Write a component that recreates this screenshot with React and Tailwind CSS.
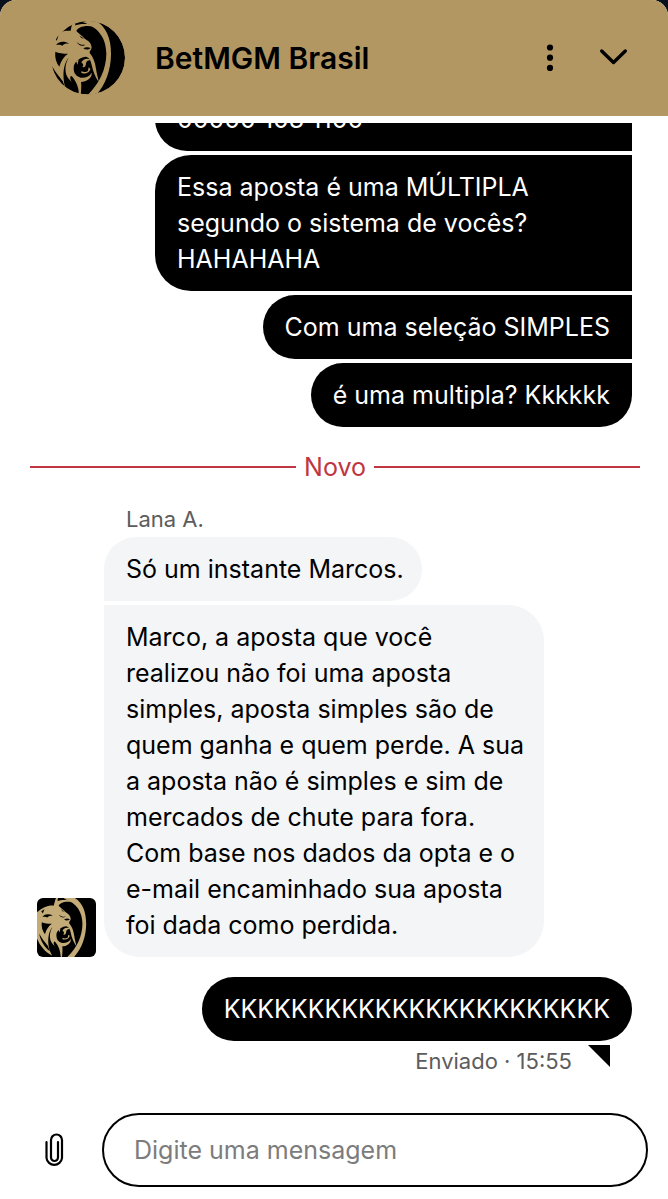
const sent = [
  { text: '00000 103 1100', shape: 'w-full rounded-l-[36px]' },
  { text: 'Essa aposta é uma MÚLTIPLA segundo o sistema de vocês? HAHAHAHA', shape: 'rounded-l-[36px]' },
  { text: 'Com uma seleção SIMPLES', shape: 'rounded-l-[36px]' },
  { text: 'é uma multipla? Kkkkkk', shape: 'rounded-l-[36px] rounded-br-[36px]' },
]

const received = [
  { text: 'Só um instante Marcos.', shape: 'rounded-t-[36px] rounded-br-[36px]' },
  {
    text: 'Marco, a aposta que você realizou não foi uma aposta simples, aposta simples são de quem ganha e quem perde. A sua a aposta não é simples e sim de mercados de chute para fora. Com base nos dados da opta e o e-mail encaminhado sua aposta foi dada como perdida.',
    shape: 'rounded-r-[36px] rounded-bl-[36px]',
  },
]

function LionHead() {
  return (
    <g>
      <g fill="currentColor">
        {/* juba */}
        <path d="M160 28C198 46 214 84 213 135C212 182 196 226 166 258L142 256C178 222 199 178 199 130C198 88 180 54 128 36Z" />
        <path d="M92 64C92 46 118 39 150 43L160 50C136 45 112 51 108 66Z" />
        <path d="M92 66C93 52 96 42 102 28L109 28C104 42 105 48 110 54L104 68Z" />
        {/* rosto */}
        <path d="M20 95C42 74 60 64 78 62L108 62C118 72 128 78 134 86L140 90C150 95 154 104 155 113C154 120 148 122 149 129C160 142 165 156 168 176C170 192 175 205 176 216C165 200 159 184 155 165C152 150 148 143 138 140C124 141 108 150 102 166C98 186 106 198 122 203C138 204 149 199 155 188C157 205 140 215 123 216C125 228 123 245 122 258H117C117 238 112 218 97 200C90 192 88 206 96 220L84 250C52 235 28 200 20 160Z" />
      </g>
      <g fill="#000">
        <path d="M46 125C56 129 68 131 84 131C72 139 63 152 58 170C48 157 44 142 46 125Z" />
        <path d="M36 168C48 190 58 200 68 213L76 234C58 222 42 198 36 168Z" />
        {/* mechas da barba */}
        <path d="M86 143C76 160 74 178 79 194C85 210 104 218 117 256L88 254C78 240 72 226 71 208C69 184 72 160 86 143Z" />
        <path d="M48 105C58 93 72 93 88 100C78 101 72 101 67 107C60 103 56 104 48 105Z" />
        <path d="M110 96C118 103 126 106 136 104C126 111 116 107 110 96Z" />
        <path d="M130 115C137 110 145 111 152 114C145 120 136 120 130 115Z" />
        <path d="M44 84L56 76L50 92Z" />
        <path d="M118 76L132 86L124 84Z" />
      </g>
      <g fill="currentColor">
        {/* dentes e língua */}
        <path d="M124 158C128 146 144 143 153 150C146 150 139 153 138 160C138 169 133 174 127 171C132 165 130 160 124 158Z" />
        <path d="M124 184C133 188 141 186 144 182L146 172L151 176C150 187 136 193 124 189Z" />
        <path d="M108 152L116 150L112 164Z" />
      </g>
    </g>
  )
}

function Logo() {
  return (
    <svg viewBox="33 27 228 234" className="w-[76px] h-[78px] shrink-0 text-[#b29762]" aria-hidden="true">
      <defs>
        <clipPath id="logo-disc">
          <circle cx="144" cy="143" r="111" />
        </clipPath>
      </defs>
      <g clipPath="url(#logo-disc)">
        <circle cx="145" cy="143" r="110" />
        <LionHead />
      </g>
    </svg>
  )
}

function Avatar() {
  return (
    <svg viewBox="28 34 222 222" className="w-[59px] h-[59px] shrink-0 rounded-md bg-black text-[#c4ac78]" aria-hidden="true">
      <LionHead />
    </svg>
  )
}

function Bubble({ text, shape, tone }) {
  return <p className={`${shape} ${tone} py-[14px] pl-[22px]`}>{text}</p>
}

export default function App() {
  return (
    <div className="h-screen bg-[#08111c]">
      <div className="h-full flex flex-col overflow-hidden rounded-t-2xl bg-white font-['Inter','Liberation_Sans',sans-serif] text-[25px] leading-[36px] text-black">
        <header className="flex items-center shrink-0 h-[116px] pl-[51px] pr-9 bg-[#b29762]">
          <Logo />
          <h1 className="flex-1 ml-7 text-3xl font-semibold">BetMGM Brasil</h1>
          <button type="button" aria-label="Mais opções" className="mr-7">
            <svg viewBox="0 0 36 36" className="w-9 h-9" fill="currentColor" aria-hidden="true">
              <circle cx="18" cy="7.5" r="3.1" />
              <circle cx="18" cy="17.7" r="3.1" />
              <circle cx="18" cy="27.9" r="3.1" />
            </svg>
          </button>
          <button type="button" aria-label="Minimizar">
            <svg viewBox="0 0 36 36" className="w-9 h-9" fill="none" stroke="currentColor" strokeWidth="3.4" strokeLinecap="round" strokeLinejoin="round" aria-hidden="true">
              <path d="M5.7 11L17.5 22.5L29.3 11" />
            </svg>
          </button>
        </header>

        <main className="flex-1 min-h-0 flex flex-col justify-end overflow-hidden mt-[7px]">
          <div className="flex flex-col items-end gap-1 pl-[155px] pr-9">
            {sent.map((m) => (
              <Bubble key={m.text} {...m} tone="bg-black text-white pr-[22px]" />
            ))}
          </div>

          <div className="flex items-center gap-2 mt-[22px] pl-[30px] pr-7 text-[#bf3542]">
            <span className="flex-1 h-0.5 bg-current" />
            Novo
            <span className="flex-1 h-0.5 bg-current" />
          </div>

          <div className="flex items-end gap-2 mt-5 pl-[37px] pr-[124px]">
            <Avatar />
            <div className="flex-1 flex flex-col items-start gap-1">
              <span className="px-[22px] text-[22px] leading-7 text-[#5c5c5c]">Lana A.</span>
              {received.map((m) => (
                <Bubble key={m.text} {...m} tone="bg-[#f4f5f7] pr-[18px]" />
              ))}
            </div>
          </div>

          <div className="flex flex-col items-end mt-5 pr-9">
            <Bubble text="KKKKKKKKKKKKKKKKKKKKKKK" shape="rounded-[36px]" tone="bg-black text-white pr-[22px]" />
            <div className="flex items-start gap-4 mt-1 pr-[22px] text-[22px] leading-8 text-[#5c5c5c]">
              <span>Enviado · 15:55</span>
              <svg viewBox="0 0 22 22" className="w-[22px] h-[22px] text-black" aria-hidden="true">
                <path d="M0 0H22V22Z" fill="currentColor" />
              </svg>
            </div>
          </div>
        </main>

        <form className="flex items-center shrink-0 gap-9 pt-9 pb-3 pl-[42px] pr-5">
          <button type="button" aria-label="Anexar arquivo">
            <svg viewBox="0 0 24 36" className="w-6 h-9" fill="none" stroke="currentColor" strokeWidth="2.2" strokeLinecap="round" aria-hidden="true">
              <path d="M4.5 10V26A7.8 7.8 0 0 0 20 26V8A5.5 5.5 0 0 0 9 8V25.5A3.5 3.5 0 0 0 16 25.5V10" />
            </svg>
          </button>
          <input
            type="text"
            aria-label="Digite uma mensagem"
            placeholder="Digite uma mensagem"
            className="flex-1 min-w-0 h-[74px] px-[30px] rounded-full border-2 border-black placeholder:text-[#7c7c7c]"
          />
        </form>
      </div>
    </div>
  )
}
